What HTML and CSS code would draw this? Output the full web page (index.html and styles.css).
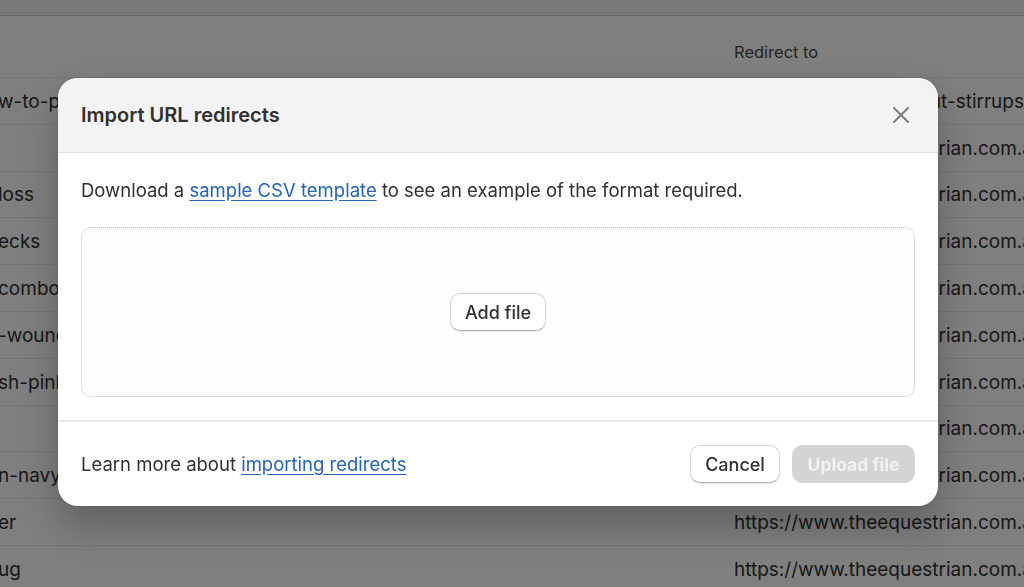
FILE: index.html
```html
<!DOCTYPE html>
<html lang="en">
<head>
    <meta charset="UTF-8">
    <meta name="viewport" content="width=device-width, initial-scale=1.0">
    <title>URL redirects</title>
    <link rel="stylesheet" href="styles.css">
</head>
<body>
    <!-- Redirects table behind the modal -->
    <div class="page">
        <div class="topbar"></div>
        <div class="row head">
            <div class="from"></div>
            <div class="to">Redirect to</div>
        </div>
        <div class="row"><div class="from">w-to-pu</div><div class="to end">/products/stainless-steel-short-cut-stirrups</div></div>
        <div class="row"><div class="from"></div><div class="to">https://www.theequestrian.com.au</div></div>
        <div class="row"><div class="from">loss</div><div class="to">https://www.theequestrian.com.au</div></div>
        <div class="row"><div class="from">ecks</div><div class="to">https://www.theequestrian.com.au</div></div>
        <div class="row"><div class="from">combo-t</div><div class="to">https://www.theequestrian.com.au</div></div>
        <div class="row"><div class="from">-wound</div><div class="to">https://www.theequestrian.com.au</div></div>
        <div class="row"><div class="from">sh-pink</div><div class="to">https://www.theequestrian.com.au</div></div>
        <div class="row"><div class="from"></div><div class="to">https://www.theequestrian.com.au</div></div>
        <div class="row"><div class="from">n-navy</div><div class="to">https://www.theequestrian.com.au</div></div>
        <div class="row"><div class="from">er</div><div class="to">https://www.theequestrian.com.au</div></div>
        <div class="row"><div class="from">ug</div><div class="to">https://www.theequestrian.com.au</div></div>
    </div>

    <div class="overlay">
        <div class="modal">
            <div class="modal-header">
                <h2>Import URL redirects</h2>
                <button class="close" aria-label="Close">
                    <svg width="18" height="18" viewBox="0 0 18 18">
                        <path d="M2 2 L16 16 M16 2 L2 16" stroke="#777" stroke-width="1.8" stroke-linecap="round" fill="none"/>
                    </svg>
                </button>
            </div>

            <div class="modal-body">
                <p>Download a <a href="#">sample CSV template</a> to see an example of the format required.</p>
                <div class="dropzone">
                    <button class="btn">Add file</button>
                </div>
            </div>

            <div class="modal-footer">
                <p>Learn more about <a href="#">importing redirects</a></p>
                <div class="actions">
                    <button class="btn">Cancel</button>
                    <button class="btn primary" disabled>Upload file</button>
                </div>
            </div>
        </div>
    </div>
</body>
</html>
```

FILE: styles.css
```css
body {
    margin: 0;
    font-family: Inter, "Noto Sans", Arial, sans-serif;
    background: #fff;
    color: #303030;
    overflow: hidden;
    height: 587px;
}

.page {
    width: 1024px;
    overflow: hidden;
}

.topbar {
    height: 15px;
    border-bottom: 1px solid #d0d0d0;
    background: #f4f4f4;
}

.row {
    display: flex;
    height: 44.8px;
    border-bottom: 1px solid #ebebeb;
    align-items: center;
    font-size: 19px;
    white-space: nowrap;
    padding-top: 1px;
    box-sizing: content-box;
}

.row.head {
    height: 62px;
    font-size: 16.5px;
    color: #4a4a4a;
    box-sizing: border-box;
    align-items: flex-start;
    padding-top: 26px;
}

.from {
    width: 736px;
    flex: none;
    overflow: hidden;
    margin-left: -2px;
}

.to {
    flex: none;
    width: 290px;
    overflow: hidden;
}

/* long slug: only its tail shows to the right of the modal */
.to.end {
    display: flex;
    justify-content: flex-end;
}

.overlay {
    position: fixed;
    inset: 0;
    background: rgba(0, 0, 0, 0.5);
    display: flex;
    align-items: flex-start;
    padding: 78px 0 0 58px;
}

.modal {
    width: 880px;
    background: #fff;
    border-radius: 20px;
    overflow: hidden;
    box-shadow: 0 20px 40px rgba(0, 0, 0, 0.25), 0 0 6px rgba(0, 0, 0, 0.1);
}

.modal-header {
    height: 74px;
    background: #f3f3f3;
    border-bottom: 1px solid #e3e3e3;
    display: flex;
    align-items: center;
    justify-content: space-between;
    padding: 0 28px 0 23px;
}

.modal-header h2 {
    margin: 0;
    font-size: 20px;
    font-weight: 600;
    color: #303030;
}

.close {
    background: none;
    border: none;
    padding: 0;
    width: 18px;
    height: 18px;
    cursor: pointer;
}

.modal-body {
    padding: 25px 23px 23px;
    border-bottom: 2px solid #ebebeb;
}

.modal-body p,
.modal-footer p {
    margin: 0;
    font-size: 18.5px;
    color: #303030;
    line-height: 24px;
}

a {
    color: #2463bc;
    text-decoration: underline;
    text-underline-offset: 3px;
}

.dropzone {
    margin-top: 25px;
    height: 168px;
    border: 1px dotted #bdbdbd;
    border-radius: 10px;
    display: flex;
    align-items: center;
    justify-content: center;
    background: #fdfdfd;
}

.btn {
    font-family: inherit;
    font-size: 18px;
    font-weight: 500;
    color: #303030;
    background: #fff;
    border: 1px solid #d4d4d4;
    border-bottom-color: #b5b5b5;
    border-radius: 10px;
    height: 38px;
    padding: 0;
    white-space: nowrap;
    box-shadow: 0 1px 0 rgba(0, 0, 0, 0.08);
    cursor: pointer;
}

.dropzone .btn {
    width: 96px;
}

.modal-footer {
    display: flex;
    align-items: center;
    justify-content: space-between;
    padding: 23px 23px 23px;
}

.actions {
    display: flex;
    gap: 12px;
}

.actions .btn {
    width: 90px;
}

.actions .btn.primary {
    width: 123px;
    background: #d4d4d4;
    border-color: #d4d4d4;
    color: #f2f2f2;
    font-weight: 700;
    font-size: 17.5px;
    box-shadow: none;
}
```
